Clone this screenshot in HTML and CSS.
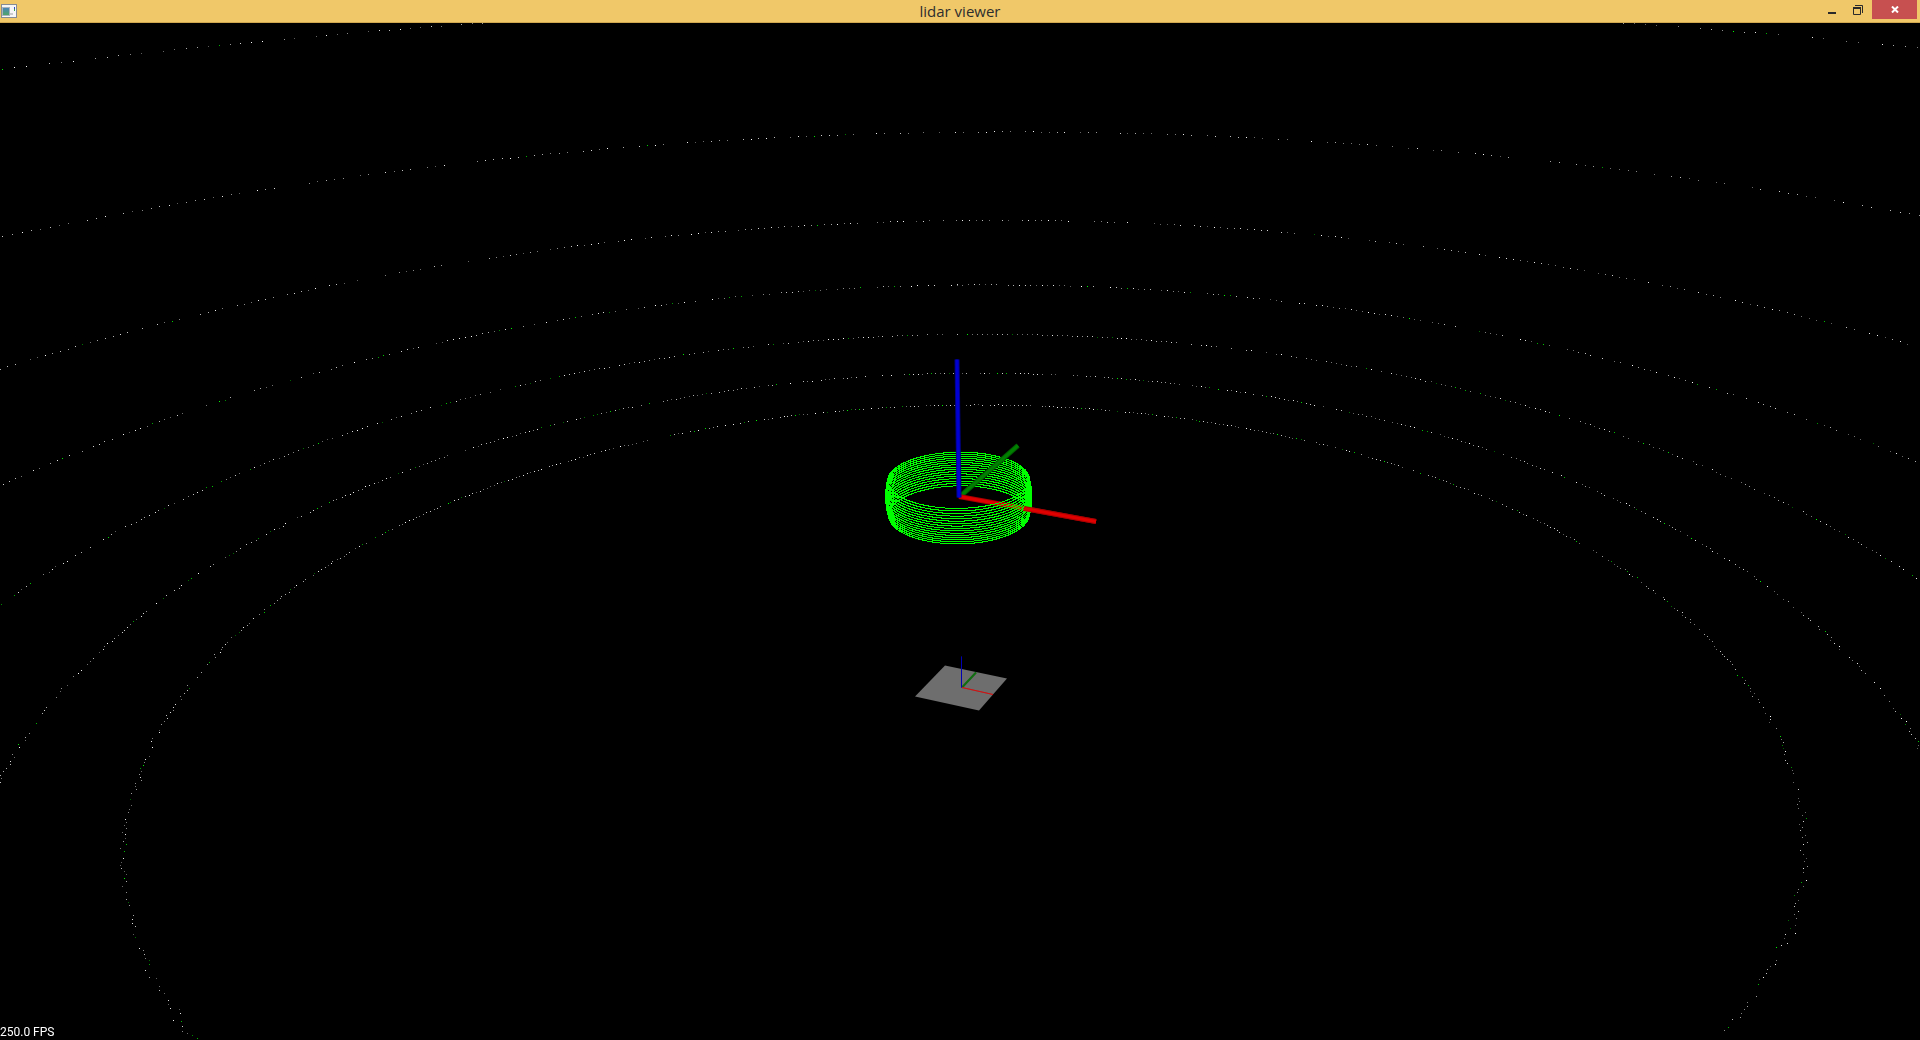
FILE: index.html
```html
<!DOCTYPE html>
<html lang="en">
<head>
<meta charset="utf-8">
<title>lidar viewer</title>
<link rel="stylesheet" href="styles.css">
</head>
<body>
<div class="window">
  <header class="titlebar">
    <svg class="app-icon" viewBox="0 0 16 14" aria-hidden="true">
      <defs><linearGradient id="pane" x1="0" y1="0" x2="0" y2="1"><stop offset="0" stop-color="#4a86b8"/><stop offset="1" stop-color="#4fa468"/></linearGradient></defs>
      <rect width="16" height="14" fill="#858c96"/>
      <rect x="1" y="1" width="14" height="12" fill="#f6f6f6"/>
      <rect x="1" y="3" width="8" height="9" fill="#a9b4bd"/>
      <rect x="2" y="4" width="6" height="7" fill="url(#pane)"/>
      <rect x="9" y="9" width="3" height="2" fill="#c9c9cc"/>
      <rect x="13" y="3" width="1" height="2" fill="#3248c0"/>
      <rect x="13" y="5" width="1" height="2" fill="#37a34a"/>
    </svg>
    <h1 class="title">lidar viewer</h1>
    <div class="controls">
      <button class="control" type="button" aria-label="Minimize"><svg viewBox="0 0 10 10"><rect x="1" y="7" width="8" height="2" fill="#2a2a2a"/></svg></button>
      <button class="control" type="button" aria-label="Restore"><svg viewBox="0 0 10 10" fill="none" stroke="#2a2a2a"><path d="M2 .5H9.500V8"/><path d="M.5 2V9.500H7.500V2M0 2.500H8M0 3.500H8"/></svg></button>
      <button class="control close" type="button" aria-label="Close"><svg viewBox="0 0 8 7"><path d="M1 .5L7 6.500M7 .5L1 6.500" stroke="#fff" stroke-width="2"/></svg></button>
    </div>
  </header>
  <main class="viewport">
    <canvas class="scene" id="scene"></canvas>
    <output class="fps">250.0 FPS</output>
  </main>
</div>
<script src="scene.js"></script>
</body>
</html>
```
FILE: styles.css
```css
* { box-sizing: border-box; }
body { margin: 0; background: #000; font-family: "Open Sans", "Noto Sans", sans-serif; }
.window { display: flex; flex-direction: column; height: 100vh; }
.titlebar {
  display: grid;
  grid-template-columns: 1fr auto 1fr;
  align-items: start;
  height: 23px;
  flex: none;
  background: #f0c869;
  border-bottom: 1px solid #d0a850;
}
.app-icon { width: 16px; height: 14px; margin: 4px 0 0 1px; }
.title { margin: 0; font-size: 15px; line-height: 23px; font-weight: 400; color: #2e2e2e; }
.controls { display: flex; justify-content: flex-end; padding-right: 3px; }
.control {
  display: flex;
  align-items: center;
  justify-content: center;
  width: 26px;
  height: 19px;
  padding: 0;
  border: 0;
  background: none;
}
.control svg { width: 10px; height: 10px; }
.control.close { width: 45px; margin-left: 1px; background: #c75050; }
.close svg { width: 8px; height: 7px; }
.viewport { position: relative; flex: 1; min-height: 0; overflow: hidden; }
.scene { display: block; width: 100%; height: 100%; }
.fps {
  position: absolute;
  left: 0;
  bottom: 0;
  font-family: Roboto, "Liberation Sans", sans-serif;
  font-size: 12px;
  line-height: 15px;
  color: #fff;
}
```
FILE: scene.js
```js
const canvas = document.getElementById("scene");
const ctx = canvas.getContext("2d");

// Camera, in units of the sensor's height above the ground
const FOCAL = 1.884;
const TILT_COS = 0.907;
const TILT_SIN = 0.421;
const DEPTH = 9.16;
const RISE = -0.7436;
const ROLL = 0.012;
const STEP = Math.PI / 450;
const SENSOR = { x: -0.004, z: 0.995, range: 0.333 };

let seed;
function random() {
  seed = (seed + 0x6d2b79f5) | 0;
  let t = Math.imul(seed ^ (seed >>> 15), 1 | seed);
  t = (t + Math.imul(t ^ (t >>> 7), 61 | t)) ^ t;
  return ((t ^ (t >>> 14)) >>> 0) / 4294967296;
}
function noise() {
  return random() + random() + random() + random() - 2;
}

function project(x, y, z) {
  const depth = DEPTH + y * TILT_COS - z * TILT_SIN;
  if (depth < 0.5) return null;
  const f = FOCAL * canvas.height / depth;
  const u = x * f;
  const v = -(RISE + y * TILT_SIN + z * TILT_COS) * f;
  return [canvas.width / 2 + u + v * ROLL, canvas.height / 2 + v - u * ROLL];
}

function dot(p) {
  if (p) ctx.fillRect(Math.floor(p[0]), Math.floor(p[1]), 1, 1);
}

function groundRings() {
  for (let angle = 15; angle >= 3; angle -= 2) {
    const radius = 1 / Math.tan(angle * Math.PI / 180);
    const greenShare = angle > 8 ? 0.14 : 0.03;
    for (let a = 0; a < 2 * Math.PI; a += STEP) {
      // Far returns are steady, near ones scatter
      const spread = 0.011 - 0.009 * Math.cos(a);
      const r = radius + noise() * spread;
      const skip = random() < 0.2;
      const green = random() < greenShare;
      const level = 90 + Math.floor(165 * random() ** 1.3);
      if (skip) continue;
      ctx.fillStyle = green ? `rgb(0,${level},0)` : `rgb(${level},${level},${level})`;
      dot(project(r * Math.sin(a), r * Math.cos(a), 0));
    }
  }
}

function sensorBand(from, to) {
  ctx.fillStyle = "#00ff00";
  for (let angle = -15; angle <= 15; angle += 2) {
    const e = angle * Math.PI / 180;
    const r = SENSOR.range * Math.cos(e);
    const z = SENSOR.z + SENSOR.range * Math.sin(e);
    for (let a = from; a < to; a += STEP) {
      dot(project(SENSOR.x + r * Math.sin(a), r * Math.cos(a), z));
    }
  }
}

// Offsets are measured from the middle of the view
function rod(x1, y1, x2, y2, width, edge, core) {
  const k = canvas.height / 1017;
  const cx = canvas.width / 2;
  const cy = canvas.height / 2;
  for (const [w, color] of [[width, edge], [width * 0.6, core]]) {
    ctx.strokeStyle = color;
    ctx.lineWidth = w * k;
    ctx.beginPath();
    ctx.moveTo(cx + x1 * k, cy + y1 * k);
    ctx.lineTo(cx + x2 * k, cy + y2 * k);
    ctx.stroke();
  }
}

function groundTile() {
  const k = canvas.height / 1017;
  const corners = [[-15, 134], [47, 147], [19, 179], [-45, 165]];
  ctx.fillStyle = "#6e6e6e";
  ctx.beginPath();
  for (const [x, y] of corners) {
    ctx.lineTo(canvas.width / 2 + x * k, canvas.height / 2 + y * k);
  }
  ctx.fill();
  rod(2, 156, 16, 141, 2, "#186818", "#107010");
  rod(2, 156, 33, 163, 1, "#c81414", "#d01414");
  rod(1.5, 156, 1.5, 125, 1, "#0000b4", "#0000b4");
}

function draw() {
  canvas.width = canvas.clientWidth;
  canvas.height = canvas.clientHeight;
  seed = 7;
  groundRings();
  sensorBand(-Math.PI / 2, Math.PI / 2);
  rod(1, -36, 58, -86, 5, "#005a00", "#008000");
  rod(-1, -35, 136, -10, 5, "#aa0000", "#e00000");
  sensorBand(Math.PI / 2, Math.PI * 1.5);
  rod(64, -23, 136, -10, 5, "#aa0000", "#e00000");
  rod(-1, -34, -3, -172, 5, "#00008c", "#0000d2");
  groundTile();
}

draw();
window.addEventListener("resize", draw);
```
